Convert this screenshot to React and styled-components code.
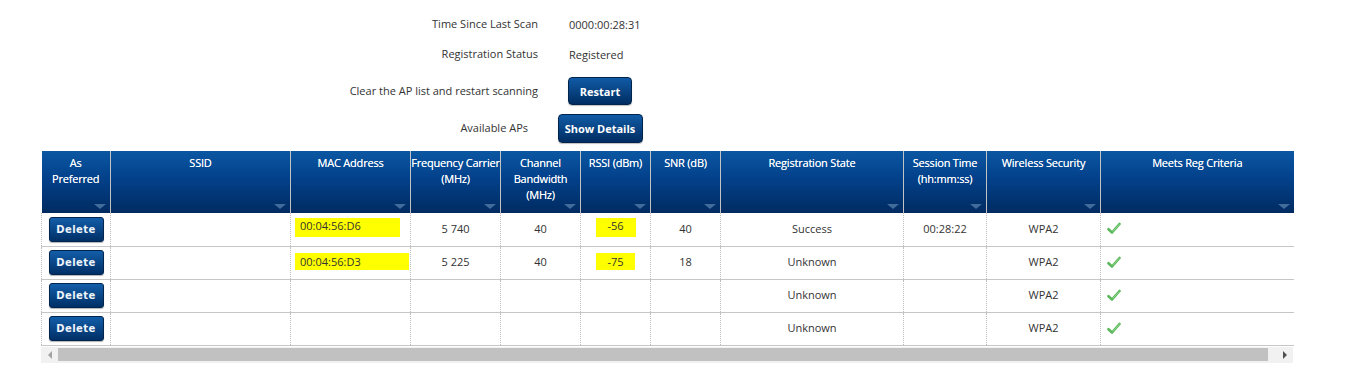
import React from 'react';
import styled, { createGlobalStyle } from 'styled-components';

const GlobalStyle = createGlobalStyle`
    body {
        margin: 0;
        background: #ffffff;
        font-family: "Open Sans", "Liberation Sans", sans-serif;
        font-size: 11px;
        color: #333333;
    }
`;

const columns = [
    { key: 'pref', title: 'As\nPreferred', width: 69 },
    { key: 'ssid', title: 'SSID', width: 180 },
    { key: 'mac', title: 'MAC Address', width: 120 },
    { key: 'freq', title: 'Frequency Carrier\n(MHz)', width: 90 },
    { key: 'bw', title: 'Channel\nBandwidth\n(MHz)', width: 80 },
    { key: 'rssi', title: 'RSSI (dBm)', width: 70 },
    { key: 'snr', title: 'SNR (dB)', width: 70 },
    { key: 'state', title: 'Registration State', width: 183 },
    { key: 'session', title: 'Session Time\n(hh:mm:ss)', width: 83 },
    { key: 'sec', title: 'Wireless Security', width: 114 },
    { key: 'meets', title: 'Meets Reg Criteria', width: 193 },
];

const rows = [
    { mac: '00:04:56:D6', macHl: 105, freq: '5 740', bw: '40', rssi: '-56', rssiHl: 40, snr: '40', state: 'Success', session: '00:28:22', sec: 'WPA2' },
    { mac: '00:04:56:D3', macHl: 114, freq: '5 225', bw: '40', rssi: '-75', rssiHl: 39, snr: '18', state: 'Unknown', session: '', sec: 'WPA2' },
    { state: 'Unknown', sec: 'WPA2' },
    { state: 'Unknown', sec: 'WPA2' },
];

function Check() {
    return (
        <svg width="14" height="13" viewBox="0 0 14 13">
            <path d="M1.5 7.2 L5 10.5 L12.5 2" fill="none" stroke="#5cb85c" strokeWidth="2.6" strokeLinecap="round" strokeLinejoin="round" />
            <path d="M6 9.2 L12.3 2.4" fill="none" stroke="#8fd98f" strokeWidth="0.9" strokeLinecap="round" />
        </svg>
    );
}

export default function App() {
    return (
        <Page>
            <GlobalStyle />
            <Info>
                <Label>Time Since Last Scan</Label>
                <Value>0000:00:28:31</Value>
                <Label>Registration Status</Label>
                <Value>Registered</Value>
                <Label $tall>Clear the AP list and restart scanning</Label>
                <Value $tall><DarkButton $w={64} $h={28}>Restart</DarkButton></Value>
                <Label $inset>Available APs</Label>
                <Value><DarkButton $w={85} $h={29}>Show Details</DarkButton></Value>
            </Info>

            <Grid>
                <colgroup>
                    {columns.map(c => <col key={c.key} style={{ width: c.width }} />)}
                </colgroup>
                <thead>
                    <tr>
                        {columns.map(c => <Th key={c.key}>{c.title}</Th>)}
                    </tr>
                </thead>
                <tbody>
                    {rows.map((r, i) => (
                        <tr key={i}>
                            <Td><DeleteButton>Delete</DeleteButton></Td>
                            <Td></Td>
                            <Td $align="left">{r.mac && <Highlight $w={r.macHl} $lift={i === 0}>{r.mac}</Highlight>}</Td>
                            <Td>{r.freq}</Td>
                            <Td>{r.bw}</Td>
                            <Td>{r.rssi && <Highlight $w={r.rssiHl} $center $lift={i === 0}>{r.rssi}</Highlight>}</Td>
                            <Td>{r.snr}</Td>
                            <Td>{r.state}</Td>
                            <Td>{r.session}</Td>
                            <Td>{r.sec}</Td>
                            <Td $align="left"><Check /></Td>
                        </tr>
                    ))}
                </tbody>
            </Grid>

            <ScrollBar>
                <Arrow $dir="left" />
                <Thumb />
                <Arrow $dir="right" />
            </ScrollBar>
        </Page>
    );
}

const Page = styled.div`
    padding: 9px 0 0 41px;
    width: 1252px;
`;

const Info = styled.div`
    display: grid;
    grid-template-columns: 497px 100px;
    column-gap: 12px;
    align-items: center;
`;

const Label = styled.div`
    height: ${p => (p.$tall ? 44 : 30)}px;
    line-height: ${p => (p.$tall ? 44 : 30)}px;
    text-align: right;
    padding-right: ${p => (p.$inset ? 10 : 0)}px;
    color: #333;
    font-size: 11px;
`;

const Value = styled.div`
    height: ${p => (p.$tall ? 44 : 30)}px;
    display: flex;
    align-items: center;
    justify-content: ${p => (typeof p.children === 'string' ? 'flex-start' : 'center')};
    padding-left: ${p => (typeof p.children === 'string' ? 19 : 0)}px;
    color: #333;
    font-size: 11px;
`;

const DarkButton = styled.button`
    width: ${p => p.$w}px;
    height: ${p => p.$h}px;
    border: 1px solid #00244c;
    border-radius: 4px;
    background: linear-gradient(#115ba6, #002d61);
    color: #ffffff;
    font-family: "Open Sans", "Liberation Sans", sans-serif;
    font-size: 11px;
    font-weight: 700;
    padding: 0;
    box-shadow: 0 1px 1px rgba(0, 0, 0, 0.25);
`;

const Grid = styled.table`
    margin-top: 8px;
    width: 1252px;
    border-collapse: collapse;
    table-layout: fixed;
`;

const Th = styled.th`
    position: relative;
    height: 62px;
    padding: 4px 0 0;
    vertical-align: top;
    box-sizing: border-box;
    background: linear-gradient(#0b57a2 0%, #03408a 45%, #002b60 100%);
    color: #ffffff;
    font-size: 11px;
    font-weight: 400;
    letter-spacing: -0.2px;
    text-shadow: 0 0 0.5px rgba(255, 255, 255, 0.8);
    line-height: 16px;
    white-space: pre;
    text-align: center;
    border-right: 1px solid #c3c3c3;

    &:last-child {
        border-right: none;
    }

    &::after {
        content: '';
        position: absolute;
        right: 4px;
        bottom: 4px;
        border-left: 6px solid transparent;
        border-right: 6px solid transparent;
        border-top: 5px solid #416b9b;
    }
`;

const Td = styled.td`
    height: 33px;
    padding: 0 0 2px ${p => (p.$align === 'left' ? 6 : 0)}px;
    box-sizing: border-box;
    text-align: ${p => p.$align || 'center'};
    vertical-align: middle;
    color: #333;
    font-size: 11px;
    border-right: 1px dotted #bdbdbd;
    border-bottom: 1px solid #c6c6c6;

    &:first-child {
        border-left: 1px dotted #bdbdbd;
        padding: 0;
    }

    &:last-child {
        border-right: none;
    }

    svg {
        display: block;
        margin-top: 1px;
    }
`;

const Highlight = styled.span`
    display: inline-block;
    width: ${p => p.$w}px;
    box-sizing: border-box;
    margin-left: ${p => (p.$center ? 0 : -2)}px;
    padding: ${p => (p.$lift ? '0 0 4px' : '1px 0 1px')} ${p => (p.$center ? 0 : 5)}px;
    line-height: 15px;
    background: #ffff00;
    text-align: ${p => (p.$center ? 'center' : 'left')};
    position: relative;
    top: ${p => (p.$lift ? -1 : 0)}px;
`;

const DeleteButton = styled.button`
    display: block;
    margin: 0 auto;
    width: 55px;
    height: 25px;
    padding: 0;
    border: 1px solid #00264f;
    border-radius: 3px;
    background: linear-gradient(#135ea9, #002f66);
    color: #eef4fb;
    font-family: "DejaVu Sans", Verdana, sans-serif;
    font-size: 10px;
    font-weight: 700;
    letter-spacing: 0.4px;
    box-shadow: 0 1px 1px rgba(0, 0, 0, 0.3);
`;

const ScrollBar = styled.div`
    display: flex;
    align-items: center;
    height: 16px;
    margin-top: 1px;
    background: #f1f1f1;
`;

const Arrow = styled.div`
    width: 17px;
    height: 16px;
    display: flex;
    align-items: center;
    justify-content: center;

    &::before {
        content: '';
        border-top: 4px solid transparent;
        border-bottom: 4px solid transparent;
        ${p => (p.$dir === 'left'
            ? 'border-right: 4px solid #a3a3a3;'
            : 'border-left: 4px solid #505050;')}
    }
`;

const Thumb = styled.div`
    flex: 1;
    height: 13px;
    background: #c1c1c1;
    margin-right: 8px;
`;
